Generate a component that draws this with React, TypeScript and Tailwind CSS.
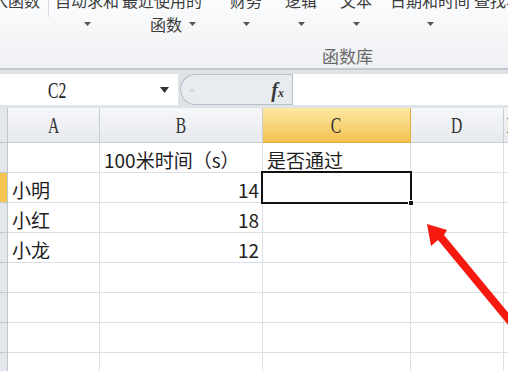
import React from 'react';

const RIBBON_BTNS = [
  { label: '插入函数', ml: 'ml-[-12px]', arrow: false },
  { label: '自动求和', ml: 'ml-[18px]', arrow: true },
  { label: '最近使用的', ml: 'ml-[35px]', arrow: true, second: '函数' },
  { label: '财务', ml: 'ml-[44px]', arrow: true },
  { label: '逻辑', ml: 'ml-[15px]', arrow: true },
  { label: '文本', ml: 'ml-[15px]', arrow: true },
  { label: '日期和时间', ml: 'ml-[34px]', arrow: true },
  { label: '查找与引用', ml: 'ml-[44px]', arrow: true },
];

const ROWS: string[][] = [
  ['', '100米时间（s）', '是否通过', '', ''],
  ['小明', '14', '', '', ''],
  ['小红', '18', '', '', ''],
  ['小龙', '12', '', '', ''],
  ['', '', '', '', ''],
  ['', '', '', '', ''],
  ['', '', '', '', ''],
  ['', '', '', '', ''],
];

function Caret() {
  return (
    <svg width="7" height="4" viewBox="0 0 7 4">
      <path d="M0 0 H7 L3.5 4 Z" fill="#555" />
    </svg>
  );
}

function RibbonButton({ label, ml, arrow, second }: { label: string; ml: string; arrow: boolean; second?: string }) {
  return (
    <div className={`${ml} w-[40px] shrink-0 flex flex-col items-center`}>
      <div className="whitespace-nowrap h-[18px] leading-[18px] text-[16px] text-[#3c3c3c]">{label}</div>
      {arrow && (
        <div className={`mt-[6px] h-[18px] flex items-center gap-[7px] whitespace-nowrap ${second ? 'pl-[22px]' : ''}`}>
          {second && <span className="text-[16px] leading-[18px] text-[#3c3c3c]">{second}</span>}
          <Caret />
        </div>
      )}
    </div>
  );
}

export default function App() {
  return (
    <div className="relative w-[508px] h-[371px] overflow-hidden bg-white font-['Noto_Sans_CJK_SC',sans-serif]">
      {/* Ribbon */}
      <div className="h-[70px] bg-gradient-to-b from-[#fbfcfd] to-[#eef0f3] border-b-2 border-[#c3c8cf] flex flex-col overflow-hidden">
        <div className="flex -mt-[9px]">
          <RibbonButton {...RIBBON_BTNS[0]} />
          <div className="ml-[20px] w-px h-[26px] bg-[#d9dde2] shrink-0" />
          {RIBBON_BTNS.slice(1).map(b => (
            <RibbonButton key={b.label} {...b} />
          ))}
        </div>
        <div className="mt-[14px] pl-[322px] text-[17px] leading-[18px] text-[#6a6a6a]">函数库</div>
      </div>

      {/* Formula bar */}
      <div className="h-[38px] bg-[#dfe3e8] pt-[4px] pb-[3px] flex">
        <div className="w-[178px] bg-white flex items-center">
          <span className="ml-[48px] inline-block scale-x-[0.65] origin-left font-['Liberation_Serif',serif] text-[24px] leading-none text-[#222]">C2</span>
          <div className="ml-auto mr-[9px]">
            <svg width="9" height="6" viewBox="0 0 9 6">
              <path d="M0 0 H9 L4.5 6 Z" fill="#333" />
            </svg>
          </div>
        </div>
        <div className="ml-[2px] w-[112px] rounded-l-full border border-r-0 border-[#b8bfc8] bg-[#e8ebef] flex items-center">
          <span className="ml-[8px] text-[10px] leading-none text-[#c4c8cd]">=</span>
          <span className="ml-auto mr-[8px] font-['Liberation_Serif',serif] italic font-bold text-[20px] leading-none text-[#3a3a3a]">
            f<span className="text-[12px]">x</span>
          </span>
        </div>
        <div className="flex-1 bg-white border-l border-[#b8bfc8]" />
      </div>

      {/* Sheet */}
      <div className="grid grid-cols-[8px_92px_163px_148px_93px_1fr]">
        <div className="h-[35px] bg-[#e3e6ea] border-r border-b border-[#bfc5cc]" />
        {['A', 'B', 'C', 'D', 'E'].map(c => (
          <div
            key={c}
            className={`h-[35px] border-r border-b flex items-center justify-center ${
              c === 'C'
                ? 'bg-gradient-to-b from-[#fde8a2] to-[#f3c24c] border-[#e0ad45]'
                : 'bg-gradient-to-b from-[#f6f7f9] to-[#e6e9ed] border-[#c8cdd3]'
            }`}
          >
            <span className="inline-block scale-x-[0.65] font-['Liberation_Serif',serif] text-[24px] leading-none text-[#333]">{c}</span>
          </div>
        ))}

        {ROWS.map((row, r) => (
          <React.Fragment key={r}>
            <div className={`h-[30px] border-r border-b border-[#bfc5cc] ${r === 1 ? 'bg-[#f5c451]' : 'bg-[#e3e6ea]'}`} />
            {row.map((v, c) => {
              const numeric = /^\d+$/.test(v);
              const selected = r === 1 && c === 2;
              return (
                <div
                  key={c}
                  className={`relative h-[30px] border-r border-b border-[#dcdee1] flex items-center pt-[3px] text-[19px] leading-none text-[#1e1e1e] whitespace-nowrap ${
                    numeric ? 'justify-end pr-[3px]' : 'pl-[4px]'
                  }`}
                >
                  {v}
                  {selected && (
                    <div className="absolute -inset-[2px] z-10 border-2 border-[#111]">
                      <div className="absolute -right-[4px] -bottom-[4px] w-[6px] h-[6px] bg-[#111] border border-white" />
                    </div>
                  )}
                </div>
              );
            })}
          </React.Fragment>
        ))}
      </div>

      {/* Annotation arrow */}
      <svg className="absolute inset-0 pointer-events-none z-20" width="508" height="371" viewBox="0 0 508 371">
        <polygon
          points="427,224 447,230 444,235 520,327 514,332 438,240 431,246"
          fill="#f5190f"
        />
      </svg>
    </div>
  );
}
